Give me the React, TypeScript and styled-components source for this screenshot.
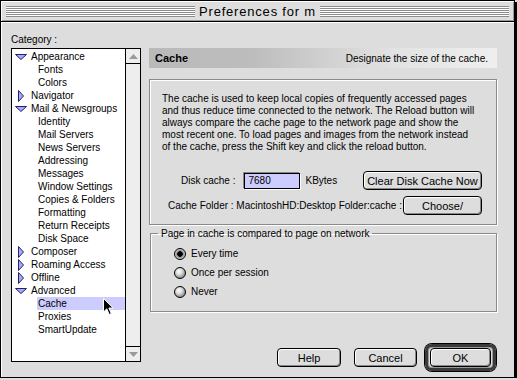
import React from 'react';
import styled, { createGlobalStyle } from 'styled-components';

const GlobalStyle = createGlobalStyle`
  html, body {
    margin: 0;
    padding: 0;
    background: #dddddd;
  }
  body {
    color: #000;
    font-family: "Liberation Sans", Arial, sans-serif;
    font-size: 10px;
  }
`;

type Item = { label: string; level: 0 | 1; open?: boolean; selected?: boolean };

const categories: Item[] = [
  { label: 'Appearance', level: 0, open: true },
  { label: 'Fonts', level: 1 },
  { label: 'Colors', level: 1 },
  { label: 'Navigator', level: 0, open: false },
  { label: 'Mail & Newsgroups', level: 0, open: true },
  { label: 'Identity', level: 1 },
  { label: 'Mail Servers', level: 1 },
  { label: 'News Servers', level: 1 },
  { label: 'Addressing', level: 1 },
  { label: 'Messages', level: 1 },
  { label: 'Window Settings', level: 1 },
  { label: 'Copies & Folders', level: 1 },
  { label: 'Formatting', level: 1 },
  { label: 'Return Receipts', level: 1 },
  { label: 'Disk Space', level: 1 },
  { label: 'Composer', level: 0, open: false },
  { label: 'Roaming Access', level: 0, open: false },
  { label: 'Offline', level: 0, open: false },
  { label: 'Advanced', level: 0, open: true },
  { label: 'Cache', level: 1, selected: true },
  { label: 'Proxies', level: 1 },
  { label: 'SmartUpdate', level: 1 },
];

const Disclosure = ({ open }: { open: boolean }) =>
  open ? (
    <svg width="12" height="8" viewBox="0 0 12 8">
      <polygon points="0.5,1.5 11.5,1.5 6,6.5" fill="#a8a8ff" stroke="#222266" />
    </svg>
  ) : (
    <svg width="8" height="12" viewBox="0 0 8 12">
      <polygon points="1.5,0.5 6.5,6 1.5,11.5" fill="#a8a8ff" stroke="#222266" />
    </svg>
  );

const Pointer = () => (
  <svg width="12" height="18" viewBox="0 0 12 18">
    <path
      d="M0.5,0.5 L0.5,14 L3.8,10.8 L6.2,16.5 L8.3,15.6 L5.9,10 L10.2,10 Z"
      fill="#000"
      stroke="#fff"
      strokeWidth="1"
    />
  </svg>
);

const ArrowUp = () => (
  <svg width="9" height="5" viewBox="0 0 9 5">
    <polygon points="0,5 9,5 4.5,0" fill="#9a9a9a" />
  </svg>
);

const ArrowDown = () => (
  <svg width="9" height="5" viewBox="0 0 9 5">
    <polygon points="0,0 9,0 4.5,5" fill="#9a9a9a" />
  </svg>
);

export default function App() {
  return (
    <>
      <GlobalStyle />
      <Window>
        <TitleBar>
          <Stripes />
          <Title>Preferences for m</Title>
          <Stripes />
        </TitleBar>
        <Body>
          <CategoryLabel>Category :</CategoryLabel>
          <Spacer />
          <ListBox>
            <Rows>
              {categories.map((c) => (
                <Row key={c.label} level={c.level}>
                  {c.level === 0 && (
                    <Twisty>
                      <Disclosure open={!!c.open} />
                    </Twisty>
                  )}
                  <RowText selected={c.selected}>{c.label}</RowText>
                  {c.selected && (
                    <CursorSpot>
                      <Pointer />
                    </CursorSpot>
                  )}
                </Row>
              ))}
            </Rows>
            <ScrollBar>
              <ScrollArrow>
                <ArrowUp />
              </ScrollArrow>
              <ScrollTrack />
              <ScrollArrow bottom>
                <ArrowDown />
              </ScrollArrow>
            </ScrollBar>
          </ListBox>
          <RightColumn>
            <Header>
              <HeaderTitle>Cache</HeaderTitle>
              <HeaderHint>Designate the size of the cache.</HeaderHint>
            </Header>
            <InfoBox>
              <Description>
                The cache is used to keep local copies of frequently accessed pages
                <br />
                and thus reduce time connected to the network. The Reload button will
                <br />
                always compare the cache page to the network page and show the
                <br />
                most recent one. To load pages and images from the network instead
                <br />
                of the cache, press the Shift key and click the reload button.
              </Description>
              <DiskRow>
                <FieldLabel>Disk cache :</FieldLabel>
                <NumberField>7680</NumberField>
                <Unit>KBytes</Unit>
                <MacButton width={119}>Clear Disk Cache Now</MacButton>
              </DiskRow>
              <FolderRow>
                <FolderPath>Cache Folder : MacintoshHD:Desktop Folder:cache :</FolderPath>
                <MacButton width={79}>Choose/</MacButton>
              </FolderRow>
            </InfoBox>
            <Group>
              <Legend>Page in cache is compared to page on network</Legend>
              <RadioRow>
                <Radio checked />
                <span>Every time</span>
              </RadioRow>
              <RadioRow>
                <Radio />
                <span>Once per session</span>
              </RadioRow>
              <RadioRow>
                <Radio />
                <span>Never</span>
              </RadioRow>
            </Group>
            <ButtonBar>
              <MacButton width={64}>Help</MacButton>
              <MacButton width={63}>Cancel</MacButton>
              <DefaultRing>
                <MacButton width={61}>OK</MacButton>
              </DefaultRing>
            </ButtonBar>
          </RightColumn>
        </Body>
      </Window>
    </>
  );
}

const Window = styled.div`
  background: #dddddd;
  border: 1px solid #000;
  box-shadow: 2px 2px 0 #000;
  box-sizing: border-box;
  display: flex;
  flex-direction: column;
  height: 378px;
  width: 515px;
`;

const TitleBar = styled.div`
  align-items: center;
  background: #dedede;
  border-bottom: 1px solid #000;
  box-shadow: inset 1px 1px 0 #fff, inset -1px -1px 0 #9a9a9a;
  display: flex;
  flex-shrink: 0;
  height: 20px;
  padding: 0 5px;
`;

const Stripes = styled.div`
  background: repeating-linear-gradient(
    to bottom,
    #8c8c8c 0,
    #8c8c8c 1px,
    #ffffff 1px,
    #ffffff 2px
  );
  flex: 1;
  height: 11px;
`;

const Title = styled.div`
  font-size: 13px;
  letter-spacing: 0.8px;
  padding: 0 4px;
`;

const Body = styled.div`
  border-left: 1px solid #fff;
  border-top: 1px solid #fff;
  display: grid;
  flex: 1;
  grid-template-columns: 130px 348px;
  grid-template-rows: 25px auto;
  column-gap: 8px;
  padding: 0 0 0 9px;
`;

const CategoryLabel = styled.div`
  align-self: end;
  padding-bottom: 3px;
`;

const Spacer = styled.div``;

const ListBox = styled.div`
  align-self: start;
  background: #fff;
  border: 1px solid #000;
  box-sizing: border-box;
  display: flex;
  height: 314px;
`;

const Rows = styled.div`
  flex: 1;
  padding-top: 1px;
`;

const Row = styled.div<{ level: 0 | 1 }>`
  align-items: center;
  display: flex;
  height: 13px;
  padding-left: ${(p) => (p.level === 0 ? 0 : 25)}px;
  position: relative;
`;

const Twisty = styled.div`
  align-items: center;
  display: flex;
  justify-content: center;
  width: 17px;
  margin-right: 1px;
`;

const RowText = styled.div<{ selected?: boolean }>`
  background: ${(p) => (p.selected ? '#ccccff' : 'transparent')};
  flex: ${(p) => (p.selected ? 1 : 'none')};
  line-height: 13px;
  padding-left: 1px;
  white-space: nowrap;
`;

const CursorSpot = styled.div`
  left: 91px;
  position: absolute;
  top: 1px;
`;

const ScrollBar = styled.div`
  background: #eeeeee;
  border-left: 1px solid #000;
  display: flex;
  flex-direction: column;
  width: 14px;
`;

const ScrollArrow = styled.div<{ bottom?: boolean }>`
  align-items: center;
  border-bottom: ${(p) => (p.bottom ? 'none' : '1px solid #000')};
  border-top: ${(p) => (p.bottom ? '1px solid #000' : 'none')};
  display: flex;
  height: 14px;
  justify-content: center;
`;

const ScrollTrack = styled.div`
  flex: 1;
`;

const RightColumn = styled.div`
  display: flex;
  flex-direction: column;
  height: 323px;
`;

const Header = styled.div`
  align-items: center;
  background: linear-gradient(to right, #b9b9b9 0%, #bdbdbd 30%, #e2e2e2 70%, #efefef 100%);
  display: flex;
  height: 20px;
  justify-content: space-between;
  padding: 0 9px 0 6px;
`;

const HeaderTitle = styled.div`
  font-size: 11px;
  font-weight: bold;
`;

const HeaderHint = styled.div``;

const InfoBox = styled.div`
  border: 1px solid #8a8a8a;
  box-shadow: 1px 1px 0 #fff, inset 1px 1px 0 #fff;
  display: flex;
  flex-direction: column;
  height: 146px;
  margin-top: 11px;
  box-sizing: border-box;
  padding: 13px 14px 0 12px;
`;

const Description = styled.div`
  line-height: 12px;
  white-space: nowrap;
`;

const DiskRow = styled.div`
  align-items: center;
  display: flex;
  margin-top: 18px;
  padding-left: 19px;
`;

const FieldLabel = styled.div`
  margin-right: 9px;
`;

const NumberField = styled.div`
  background: #ccccff;
  border: 1px solid #000;
  box-shadow: -1px -1px 0 #888, 1px 1px 0 #fff;
  box-sizing: border-box;
  height: 16px;
  line-height: 14px;
  padding-left: 3px;
  width: 56px;
`;

const Unit = styled.div`
  flex: 1;
  margin-left: 5px;
`;

const FolderRow = styled.div`
  align-items: center;
  display: flex;
  margin-top: 6px;
  padding-left: 6px;
`;

const FolderPath = styled.div`
  flex: 1;
`;

const MacButton = styled.div<{ width: number }>`
  align-items: center;
  background: #dddddd;
  border: 1px solid #000;
  border-radius: 4px;
  box-shadow: inset 1px 1px 0 #fff, inset -1px -1px 0 #888;
  box-sizing: border-box;
  display: flex;
  font-size: 11px;
  height: 19px;
  justify-content: center;
  width: ${(p) => p.width}px;
`;

const Group = styled.fieldset`
  border: 1px solid #8a8a8a;
  box-shadow: 1px 1px 0 #fff, inset 1px 1px 0 #fff;
  box-sizing: border-box;
  margin: 3px 0 0 1px;
  padding: 5px 0 10px 23px;
  width: 347px;
`;

const Legend = styled.legend`
  margin-left: -16px;
  padding: 0 3px;
`;

const RadioRow = styled.div`
  align-items: center;
  display: flex;
  gap: 5px;
  height: 19px;
`;

const Radio = styled.div<{ checked?: boolean }>`
  background: ${(p) =>
    p.checked
      ? 'radial-gradient(circle, #000 0 2.5px, #8a8a8a 3px, #d0d0d0 5px)'
      : 'radial-gradient(circle at 40% 35%, #ffffff 0, #dcdcdc 3px, #9a9a9a 6px)'};
  border: 1px solid #000;
  border-radius: 50%;
  box-sizing: border-box;
  height: 12px;
  width: 12px;
`;

const ButtonBar = styled.div`
  align-items: center;
  display: flex;
  gap: 8px;
  justify-content: flex-end;
  margin-top: auto;
  padding-right: 1px;

  & > div:first-child {
    margin-right: 5px;
  }
`;

const DefaultRing = styled.div`
  border: 3px solid #3a3a3a;
  border-radius: 7px;
  box-shadow: inset 0 0 0 1px #999, 0 0 0 1px #000;
  padding: 1px 2px;
`;
